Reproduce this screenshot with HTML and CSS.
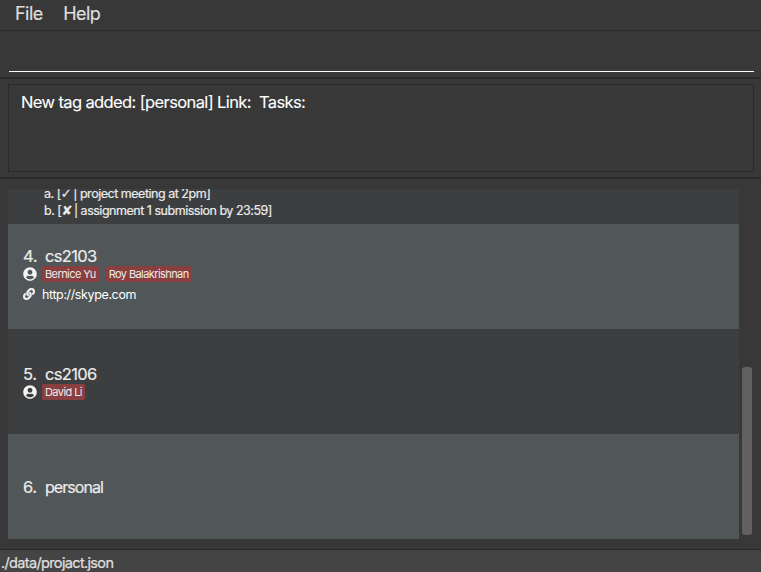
FILE: index.html
```html
<!DOCTYPE html>
<html lang="en">
<head>
<meta charset="utf-8">
<title>Projects</title>
<link rel="stylesheet" href="styles.css">
</head>
<body>
<svg class="defs" aria-hidden="true">
  <symbol id="user" viewBox="0 0 496 512"><path d="M248 8C111 8 0 119 0 256s111 248 248 248 248-111 248-248S385 8 248 8zm0 96c48.600 0 88 39.400 88 88s-39.400 88-88 88-88-39.400-88-88 39.400-88 88-88zm0 344c-58.700 0-111.300-26.600-146.500-68.200 18.800-35.400 55.600-59.800 98.500-59.800 2.400 0 4.800.4 7.100 1.100 13 4.200 26.600 6.900 40.900 6.900s28-2.700 40.900-6.900c2.300-.7 4.700-1.100 7.100-1.100 42.900 0 79.700 24.400 98.500 59.800C359.300 421.400 306.700 448 248 448z"/></symbol>
  <symbol id="link" viewBox="0 0 512 512"><path d="M326.612 185.391c59.747 59.809 58.927 155.698.36 214.590-.110.120-.240.250-.360.370l-67.200 67.200c-59.270 59.270-155.699 59.262-214.960 0-59.270-59.260-59.270-155.700 0-214.960l37.106-37.106c9.840-9.840 26.786-3.300 27.294 10.606.648 17.722 3.826 35.527 9.690 52.721 1.986 5.822.567 12.262-3.783 16.612l-13.087 13.087c-28.026 28.026-28.905 73.660-1.155 101.960 28.024 28.579 74.086 28.749 102.325.510l67.200-67.190c28.191-28.191 28.073-73.757 0-101.830-3.701-3.694-7.429-6.564-10.341-8.569a16.037 16.037 0 0 1-6.947-12.606c-.396-10.567 3.348-21.456 11.698-29.806l21.054-21.055c5.521-5.521 14.182-6.199 20.584-1.731a152.482 152.482 0 0 1 20.522 17.197zM467.547 44.449c-59.261-59.262-155.690-59.270-214.960 0l-67.200 67.200c-.120.120-.250.250-.360.370-58.566 58.892-59.387 154.781.360 214.590a152.454 152.454 0 0 0 20.521 17.196c6.402 4.468 15.064 3.789 20.584-1.731l21.054-21.055c8.350-8.350 12.094-19.239 11.698-29.806a16.037 16.037 0 0 0-6.947-12.606c-2.912-2.005-6.640-4.875-10.341-8.569-28.073-28.073-28.191-73.639 0-101.830l67.200-67.190c28.239-28.239 74.300-28.069 102.325.510 27.750 28.300 26.872 73.934-1.155 101.960l-13.087 13.087c-4.350 4.350-5.769 10.790-3.783 16.612 5.864 17.194 9.042 34.999 9.690 52.721.509 13.906 17.454 20.446 27.294 10.606l37.106-37.106c59.271-59.259 59.271-155.699.001-214.959z"/></symbol>
</svg>
<div class="app">
  <nav class="menu"><span class="file">File</span><span class="help">Help</span></nav>
  <section class="command"><div class="input"></div></section>
  <section class="result"><div class="message">New tag added: [personal] Link:&nbsp; Tasks:</div></section>
  <main class="body">
    <div class="list">
      <div class="card tasks">
        <div class="task">a. [<span class="mark">✓</span> | project meeting at 2pm]</div>
        <div class="task">b. [<span class="mark">✘</span> | assignment 1 submission by 23:59]</div>
      </div>
      <div class="card light">
        <div class="title"><span class="num">4.</span><span class="name">cs2103</span></div>
        <div class="people"><svg class="icon"><use href="#user"/></svg><span class="tag">Bernice Yu</span><span class="tag">Roy Balakrishnan</span></div>
        <div class="url"><svg class="icon small"><use href="#link"/></svg><span>http://skype.com</span></div>
      </div>
      <div class="card middle">
        <div class="title"><span class="num">5.</span><span class="name">cs2106</span></div>
        <div class="people"><svg class="icon"><use href="#user"/></svg><span class="tag">David Li</span></div>
      </div>
      <div class="card light last">
        <div class="title"><span class="num">6.</span><span class="name word">personal</span></div>
      </div>
    </div>
    <div class="scroll"><div class="thumb"></div></div>
  </main>
  <footer class="status">./data/projact.json</footer>
</div>
</body>
</html>
```
FILE: styles.css
```css
* { box-sizing: border-box; }
body { margin: 0; background: #383838; color: #ececec; font-family: Inter, "Liberation Sans", sans-serif; overflow: hidden; -webkit-text-stroke: 0.2px; }
.defs { display: none; }
.app { height: 572px; display: flex; flex-direction: column; white-space: nowrap; }
.menu { height: 31px; flex: none; border-bottom: 1px solid #2a2a2a; padding-left: 15px; display: flex; gap: 20.500px; font-size: 18px; line-height: 28px; color: #dedede; letter-spacing: -0.55px; }
.command { height: 48px; flex: none; padding: 0 7px 0 9px; border-bottom: 2px solid #2b2b2b; }
.input { height: 41px; border-bottom: 1px solid #fff; }
.result { height: 100px; flex: none; padding: 5px 7px 6px 8px; border-bottom: 2px solid #2b2b2b; }
.message { height: 88px; border: 1px solid #292929; padding: 6px 12px; font-size: 16.500px; line-height: 22px; letter-spacing: -0.62px; color: #fff; -webkit-text-stroke: 0.1px; }
.body { height: 370px; flex: none; padding: 10px 9px 10px 8px; display: flex; gap: 3px; }
.list { width: 731px; height: 350px; overflow: hidden; }
.card { height: 105px; padding: 22px 0 0 15px; background: #3c3e3f; }
.light { background: #515658; }
.tasks { height: 35px; padding: 0 0 0 36px; display: flex; flex-direction: column; justify-content: flex-end; }
.task { height: 17px; flex: none; font-size: 12.500px; line-height: 17px; letter-spacing: -0.48px; }
.task:last-child { margin-bottom: 5px; }
.mark { font-family: "DejaVu Sans", sans-serif; font-size: 13px; line-height: 1; margin-right: -1px; }
.title { height: 20px; font-size: 16.500px; line-height: 20px; letter-spacing: -0.65px; display: flex; }
.num { width: 22px; letter-spacing: -0.4px; }
.word { font-size: 16px; letter-spacing: -0.95px; }
.people, .url { display: flex; align-items: center; }
.people { height: 16px; }
.tag { height: 16px; line-height: 16px; padding: 0 3px; border-radius: 2px; background: #893f40; font-size: 11px; letter-spacing: -0.58px; margin-right: 7px; -webkit-text-stroke: 0; }
.icon { width: 14px; height: 14px; margin-right: 5px; fill: #f4f4f4; flex: none; }
.small { width: 12px; height: 12px; margin-right: 7px; stroke: #f4f4f4; stroke-width: 16px; }
.url { height: 18px; margin-top: 3px; font-size: 12.500px; letter-spacing: -0.38px; color: #fff; -webkit-text-stroke: 0; }
.middle { padding-top: 35px; }
.last { padding-top: 43px; }
.scroll { width: 10px; padding-top: 178px; }
.thumb { height: 168px; border-radius: 3px; background: #616161; }
.status { height: 23px; flex: none; border-top: 1px solid #2a2a2a; background: #444; padding-left: 1px; font-size: 14.500px; line-height: 26px; letter-spacing: -0.65px; color: #e0e0e0; }
```
